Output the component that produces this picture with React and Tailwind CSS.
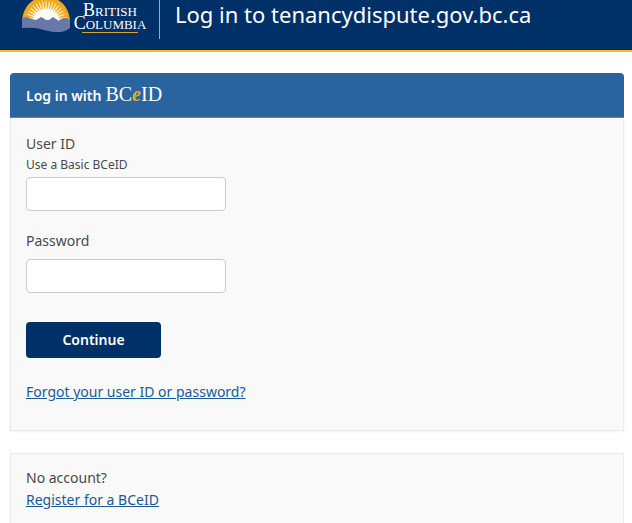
import { useState } from "react"

const rays = [-80, -70, -60, -50, -40, -30, -20, -10, 0, 10, 20, 30, 40, 50, 60, 70, 80]

function SunLogo() {
    return (
        <svg viewBox="0 0 48 32" className="h-8 w-12 shrink-0" aria-hidden="true">
            <path d="M0 21C1 8 9-3 24-3S47 8 48 21Z" fill="#f0a91c" />
            {rays.map((angle) => (
                <path key={angle} d="M22.6 21L23.5 2L24 0L24.5 2L25.4 21Z" fill="#fff3cc" transform={`rotate(${angle} 24 21)`} />
            ))}
            <path d="M11 21C11 13 17 9 24 9S37 13 37 21Z" fill="#fff" />
            <path d="M0 18L5 17L10 19L14 20L19 17L21 18L24 20L27 20L31 17L34 19L37 21L41 18L44 18L48 20V28C42 33 34 33 26 31C17 28 9 27 0 28Z" fill="#6878a8" />
        </svg>
    )
}

function App() {
    const [userId, setUserId] = useState('')
    const [password, setPassword] = useState('')

    function handleSubmit(e) {
        e.preventDefault()
    }

    return (
        <div className="min-h-screen flex flex-col bg-white text-[#494949] font-['Noto_Sans',sans-serif]">

            {/* Header */}
            <header className="flex items-start h-13 bg-[#003068] border-b-2 border-[#fcba19] pl-[22px]">
                <SunLogo />
                <div className="w-[89px] shrink-0 pt-1 pr-[9px] flex flex-col items-center">
                    <p className="w-20 text-center text-[18px] leading-[13px] text-white [font-variant:small-caps] font-['Liberation_Serif',serif]">British Columbia</p>
                    <span className="mt-[2px] h-px w-14 bg-[#d9a52c]" />
                </div>
                <div className="h-[39px] w-px shrink-0 bg-[#d9a52c]" />
                <h1 className="pl-[15px] text-[22px] leading-7 text-white whitespace-nowrap">Log in to tenancydispute.gov.bc.ca</h1>
            </header>

            <main className="flex-1 flex flex-col gap-[22px] pt-[21px] pl-[10px] pr-2">

                {/* Login panel */}
                <section>
                    <div className="h-[45px] flex items-center px-4 rounded-t bg-[#29649f] border-b border-[#5585b4] text-white">
                        <h2 className="flex items-baseline gap-1 text-[14px] leading-6 font-semibold">
                            Log in with
                            <span className="text-[20px] font-normal font-['Liberation_Serif',serif]">BC<i className="font-bold text-[#e3a82b]">e</i>ID</span>
                        </h2>
                    </div>
                    <form onSubmit={handleSubmit} className="flex flex-col items-start bg-[#f9f9f9] border border-t-0 border-[#ebebeb] shadow-xs px-[15px] pt-4 pb-7">
                        <label htmlFor="user" className="text-[14px] leading-5">
                            User ID
                            <span className="block text-[12px] leading-[22px]">Use a Basic BCeID</span>
                        </label>
                        <input
                            id="user"
                            type="text"
                            value={userId}
                            onChange={(e) => setUserId(e.target.value)}
                            className="mt-px w-50 h-[34px] px-3 bg-white border border-[#ccc] rounded"
                        />

                        <label htmlFor="password" className="mt-5 mb-2 text-[14px] leading-5">Password</label>
                        <input
                            id="password"
                            type="password"
                            value={password}
                            onChange={(e) => setPassword(e.target.value)}
                            className="w-50 h-[34px] px-3 bg-white border border-[#ccc] rounded"
                        />

                        <button type="submit" className="mt-[29px] w-[135px] h-9 pb-[2px] rounded bg-[#003068] text-[14px] font-semibold text-white cursor-pointer">
                            Continue
                        </button>

                        <a href="#forgot" className="mt-6 text-[14px] leading-5 text-[#1a5a96] underline">Forgot your user ID or password?</a>
                    </form>
                </section>

                {/* Registration panel */}
                <section className="flex-1 bg-[#f9f9f9] border border-b-0 border-[#ebebeb] px-[15px] pt-[13px] text-[14px] leading-[22px]">
                    <p>No account?</p>
                    <a href="#register" className="text-[#1a5a96] underline">Register for a BCeID</a>
                </section>
            </main>
        </div>
    )
}

export default App
